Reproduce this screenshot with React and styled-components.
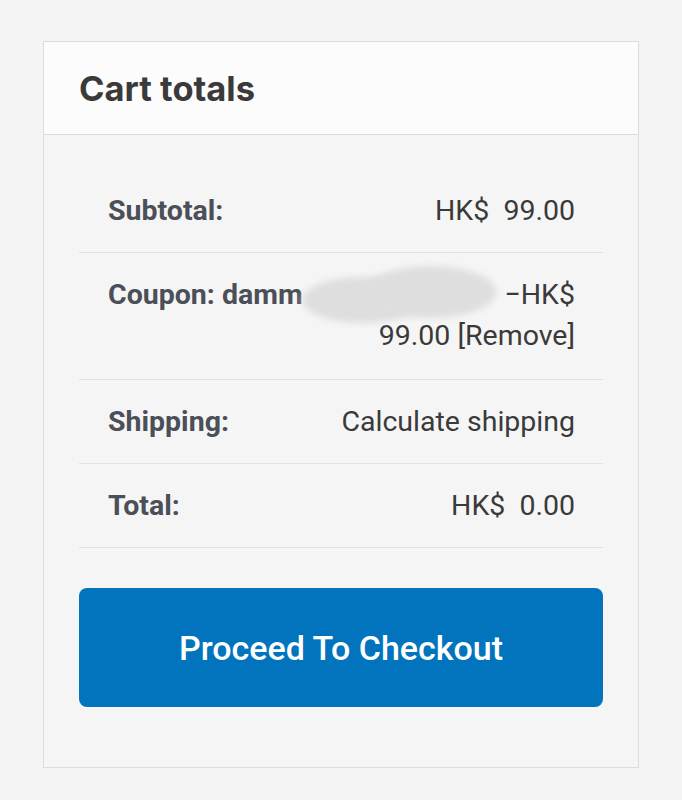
import React from "react";
import styled, { createGlobalStyle } from "styled-components";

const Global = createGlobalStyle`
  html, body { margin: 0; padding: 0; background: #f4f4f4; }
  body { font-family: Roboto, "Liberation Sans", sans-serif; }
`;

const Page = styled.div`
  padding: 41px 43px 32px;
`;

const Card = styled.section`
  border: 1px solid #dcdcdc;
  background: #f5f5f5;
`;

const Header = styled.header`
  height: 92px;
  display: flex;
  align-items: center;
  padding: 0 35px;
  background: #fcfcfc;
  border-bottom: 1px solid #dcdcdc;
`;

const Title = styled.h2`
  margin: 0;
  font-family: Inter, "Liberation Sans", sans-serif;
  font-weight: 700;
  font-size: 34.5px;
  color: #3a3a3a;
`;

const Body = styled.div`
  padding: 34px 35px 60px;
`;

const Row = styled.div`
  position: relative;
  display: flex;
  justify-content: space-between;
  align-items: flex-start;
  gap: 16px;
  padding: 21px 28px ${(p) => (p.$tall ? 23 : 21)}px 29px;
  border-bottom: 1px solid #e2e2e2;
  font-size: 28.5px;
  line-height: 41px;
`;

const Label = styled.div`
  font-weight: 700;
  color: #4b4f58;
  white-space: nowrap;
`;

const Value = styled.div`
  color: #3a3a3a;
  text-align: right;
`;

const Blur = styled.span`
  position: absolute;
  left: ${(p) => p.$x}px;
  top: ${(p) => p.$y}px;
  width: ${(p) => p.$w}px;
  height: ${(p) => p.$h}px;
  border-radius: 50%;
  background: #dedede;
  filter: blur(3px);
`;

const Button = styled.button`
  display: block;
  width: 100%;
  height: 119px;
  margin-top: 40px;
  border: none;
  border-radius: 8px;
  background: #0274be;
  color: #ffffff;
  font-family: Roboto, "Liberation Sans", sans-serif;
  font-weight: 500;
  font-size: 34px;
  cursor: pointer;
`;

export default function App() {
  return (
    <>
      <Global />
      <Page>
        <Card>
          <Header>
            <Title>Cart totals</Title>
          </Header>
          <Body>
            <Row>
              <Label>Subtotal:</Label>
              <Value>HK$&nbsp; 99.00</Value>
            </Row>
            <Row $tall>
              <Label>Coupon: damm</Label>
              <Value>
                −HK$
                <br />
                99.00 [Remove]
              </Value>
              <Blur $x={223} $y={24} $w={120} $h={46} />
              <Blur $x={285} $y={13} $w={132} $h={52} />
            </Row>
            <Row>
              <Label>Shipping:</Label>
              <Value>Calculate shipping</Value>
            </Row>
            <Row>
              <Label>Total:</Label>
              <Value>HK$&nbsp; 0.00</Value>
            </Row>
            <Button>Proceed To Checkout</Button>
          </Body>
        </Card>
      </Page>
    </>
  );
}
